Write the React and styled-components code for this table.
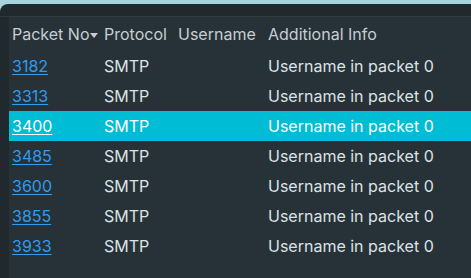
import React from 'react'
import styled, { createGlobalStyle } from 'styled-components'

const packets = [3182, 3313, 3400, 3485, 3600, 3855, 3933]
const selected = 3400

const App = () => {
  return (
    <>
      <GlobalStyle />
      <Frame>
        <Band />
        <Panel>
          <HeaderRow>
            <HeadCell>
              Packet No
              <SortArrow viewBox="0 0 8 5">
                <path d="M0 0 L8 0 L4 5 Z" fill="currentColor" />
              </SortArrow>
            </HeadCell>
            <HeadCell>Protocol</HeadCell>
            <HeadCell>Username</HeadCell>
            <HeadCell>Additional Info</HeadCell>
          </HeaderRow>
          {packets.map((p) => (
            <Row key={p} $active={p === selected}>
              <Cell>
                <PacketLink $active={p === selected}>{p}</PacketLink>
              </Cell>
              <Cell>SMTP</Cell>
              <Cell />
              <Cell>Username in packet 0</Cell>
            </Row>
          ))}
        </Panel>
      </Frame>
    </>
  )
}

const GlobalStyle = createGlobalStyle`
  html, body {
    margin: 0;
    padding: 0;
    background: #a6d3dc;
    font-family: Inter, "Noto Sans", sans-serif;
    overflow: hidden;
  }
`

const Frame = styled.div`
  margin-top: 4px;
  height: 274px;
  background: #1f292e;
  border-top-left-radius: 8px;
  display: flex;
  flex-direction: column;
`

const Band = styled.div`
  height: 12px;
  border-bottom: 1px solid #2f3a40;
`

const Panel = styled.div`
  flex: 1;
  margin-left: 9px;
  background: #263238;
`

const HeaderRow = styled.div`
  display: grid;
  grid-template-columns: 92px 74px 90px 1fr;
  height: 34px;
  align-items: center;
  color: #c7ced2;
  font-size: 16px;
`

const HeadCell = styled.div`
  padding-left: 3px;
  display: flex;
  align-items: center;
  white-space: nowrap;
`

const SortArrow = styled.svg`
  width: 8px;
  height: 5px;
  margin-left: 1px;
  margin-top: 2px;
  color: #c7ced2;
`

const Row = styled.div`
  display: grid;
  grid-template-columns: 92px 74px 90px 1fr;
  height: 30px;
  align-items: center;
  font-size: 16px;
  color: ${(p) => (p.$active ? '#ffffff' : '#dde2e5')};
  background: ${(p) => (p.$active ? '#00bcd4' : 'transparent')};
`

const Cell = styled.div`
  padding-left: 3px;
  white-space: nowrap;
`

const PacketLink = styled.a`
  color: ${(p) => (p.$active ? '#ffffff' : '#2f9cf0')};
  text-decoration: underline;
  text-underline-offset: 2px;
  cursor: pointer;
`

export default App
